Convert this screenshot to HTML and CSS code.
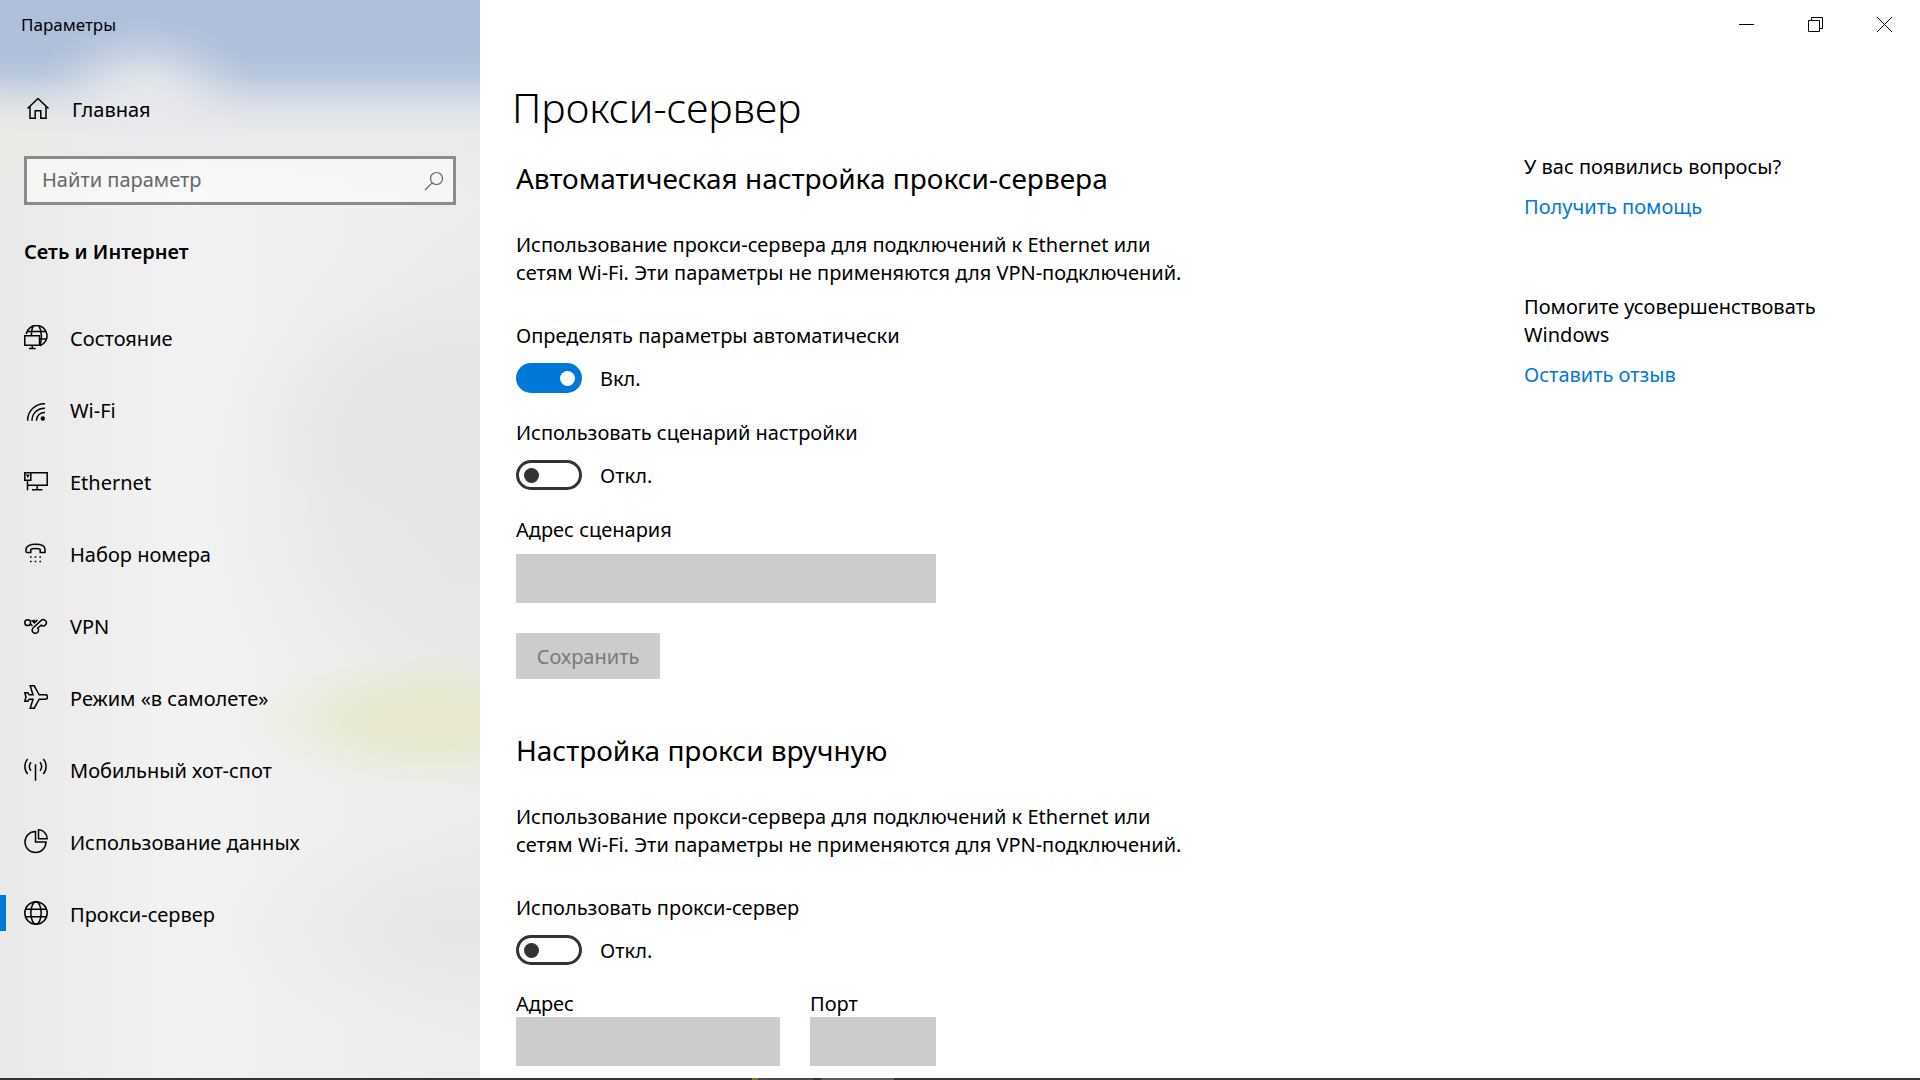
FILE: index.html
```html
<!DOCTYPE html>
<html lang="ru">
<head>
<meta charset="utf-8">
<meta name="viewport" content="width=device-width, initial-scale=1">
<title>Параметры</title>
<link rel="stylesheet" href="styles.css">
</head>
<body>
<div class="window">
  <aside class="sidebar">
    <div class="window-title">Параметры</div>
    <a class="nav-link home" href="#home">
      <svg class="icon" viewBox="0 0 24 28" aria-hidden="true"><path d="M1.500 12.500 12 2.500l10.500 10M4 10.500V22.200h5.200v-7.500h5.600v7.500H20V10.500"/></svg>
      Главная
    </a>
    <form class="search" role="search">
      <input class="search-input" type="search" placeholder="Найти параметр" aria-label="Найти параметр">
      <button class="search-button" type="button" aria-label="Поиск">
        <svg class="search-icon" viewBox="0 0 20 20" aria-hidden="true"><circle cx="12.500" cy="7.500" r="6"/><path d="M8.300 11.700 1 19"/></svg>
      </button>
    </form>
    <h2 class="section-name">Сеть и Интернет</h2>
    <nav class="nav">
      <a class="nav-link" href="#status">
        <svg class="icon" viewBox="0 0 24 28" aria-hidden="true"><path d="M2.200 9A10.500 10.500 0 1 1 16 20.800M2.800 6.500h18.700M16 14h6M9.300 1.200C8 3 7.500 5 7.400 10M15 1.200c3 5 3 13 1 19"/><path d="M.8 10.800h14.700v9.400H.8zM8.200 20.200v3.400M5 23.500h6.600"/></svg>
        Состояние
      </a>
      <a class="nav-link" href="#wifi">
        <svg class="icon" viewBox="0 0 24 28" aria-hidden="true"><path d="M3.700 23.700V23A16.800 16.300 0 0 1 21 6.700M8 23.700V23a12.500 12 0 0 1 13-11.800M12.500 23.700V23a8 7.700 0 0 1 8.500-7.500"/><circle class="solid" cx="18.800" cy="21.500" r="2.200"/></svg>
        Wi-Fi
      </a>
      <a class="nav-link" href="#ethernet">
        <svg class="icon" viewBox="0 0 24 28" aria-hidden="true"><path d="M6.800 3.800h16.400v12.400H3.500M.8 3.800h6v7.400h-6zM3.500 11v10.300M13.200 16v4.700M8 20.800h10.300M2.200 6.300h3.200M3.800 6.300v2.200"/></svg>
        Ethernet
      </a>
      <a class="nav-link" href="#dialup">
        <svg class="icon" viewBox="0 0 24 28" aria-hidden="true"><path d="M2 8.500C2 5 6 3.300 11.500 3.300S21 5 21 8.500v3h-4.800v-3c-1.500-1.200-7.900-1.200-9.400 0v3H3.300C2.500 11.500 2 11 2 10.500z"/><path class="solid" d="M6 15.200h1.600v1.600H6zM10.700 15.200h1.600v1.600h-1.600zM15.400 15.200H17v1.600h-1.600zM6 19.700h1.600v1.600H6zM10.700 19.700h1.600v1.600h-1.600zM15.400 19.700H17v1.600h-1.600z"/></svg>
        Набор номера
      </a>
      <a class="nav-link" href="#vpn">
        <svg class="icon" viewBox="0 0 24 28" aria-hidden="true"><circle cx="3.700" cy="9.700" r="2.900"/><path d="M9.200 14.800 17 7.600a3.100 3.100 0 1 1 .2 4.600l-3.500 2.800A3.200 3.200 0 1 1 9.200 14.800M6.300 11 8.500 12.800M7.500 7.200l3.600 3.200M9.500 6.900l2 1.800 2-1.800"/></svg>
        VPN
      </a>
      <a class="nav-link" href="#airplane">
        <svg class="icon" viewBox="0 0 24 28" aria-hidden="true"><path d="M6.200.8h4l5 9h6.300a2 2.200 0 0 1 0 4.400h-6.300l-5 9h-4l2.800-9H5.200l-1.500 2H.8L2 12 .8 7.800h2.900l1.500 2H9z"/></svg>
        Режим «в самолете»
      </a>
      <a class="nav-link" href="#hotspot">
        <svg class="icon" viewBox="0 0 24 28" aria-hidden="true"><path d="M11.500 7.300v16.400M3.700 2C0 6 0 13 3.700 17M19.300 2c3.700 4 3.700 11 0 15M7 5.300c-2 2.500-2 6 0 8.500M16 5.300c2 2.500 2 6 0 8.500"/></svg>
        Мобильный хот-спот
      </a>
      <a class="nav-link" href="#usage">
        <svg class="icon" viewBox="0 0 24 28" aria-hidden="true"><path d="M11.500 2.500A10.500 10.500 0 1 0 22 13H11.500zM14.500.8v9h8.700A8.700 9 0 0 0 14.500.8z"/></svg>
        Использование данных
      </a>
      <a class="nav-link active" href="#proxy" aria-current="page">
        <svg class="icon" viewBox="0 0 24 28" aria-hidden="true"><circle cx="12" cy="12" r="11.200"/><ellipse cx="12" cy="12" rx="5.200" ry="11.200"/><path d="M1.500 8.300h21M1.500 15.700h21"/></svg>
        Прокси-сервер
      </a>
    </nav>
  </aside>

  <div class="page">
    <div class="caption">
      <button class="caption-button" type="button" aria-label="Свернуть"><svg class="caption-icon" viewBox="0 0 15 15" aria-hidden="true"><path d="M0 7.500h15"/></svg></button>
      <button class="caption-button" type="button" aria-label="Восстановить"><svg class="caption-icon" viewBox="0 0 15 15" aria-hidden="true"><path d="M.5 3.500h11v11H.5zM3.500 3.500v-3h11v11h-3"/></svg></button>
      <button class="caption-button" type="button" aria-label="Закрыть"><svg class="caption-icon" viewBox="0 0 15 15" aria-hidden="true"><path d="M0 0l15 15M15 0 0 15"/></svg></button>
    </div>
    <div class="columns">
      <main class="content">
        <h1 class="page-title">Прокси-сервер</h1>

        <section class="group">
          <h2 class="group-title">Автоматическая настройка прокси-сервера</h2>
          <p class="description">Использование прокси-сервера для подключений к Ethernet или сетям Wi-Fi. Эти параметры не применяются для VPN-подключений.</p>
          <div class="setting">
            <label for="auto-detect">Определять параметры автоматически</label>
            <div class="switch-row"><input class="switch" type="checkbox" role="switch" id="auto-detect" checked><span>Вкл.</span></div>
          </div>
          <div class="setting">
            <label for="use-script">Использовать сценарий настройки</label>
            <div class="switch-row"><input class="switch" type="checkbox" role="switch" id="use-script"><span>Откл.</span></div>
          </div>
          <div class="setting script-address">
            <label for="script-address">Адрес сценария</label>
            <input class="field" type="text" id="script-address" disabled>
          </div>
          <button class="save" type="button" disabled>Сохранить</button>
        </section>

        <section class="group">
          <h2 class="group-title">Настройка прокси вручную</h2>
          <p class="description">Использование прокси-сервера для подключений к Ethernet или сетям Wi-Fi. Эти параметры не применяются для VPN-подключений.</p>
          <div class="setting">
            <label for="use-proxy">Использовать прокси-сервер</label>
            <div class="switch-row"><input class="switch" type="checkbox" role="switch" id="use-proxy"><span>Откл.</span></div>
          </div>
          <div class="endpoint">
            <div class="endpoint-part">
              <label for="address">Адрес</label>
              <input class="field" type="text" id="address" disabled>
            </div>
            <div class="endpoint-part">
              <label for="port">Порт</label>
              <input class="field" type="text" id="port" disabled>
            </div>
          </div>
        </section>
      </main>

      <aside class="help">
        <section class="help-block">
          <p>У вас появились вопросы?</p>
          <a class="help-link" href="#help">Получить помощь</a>
        </section>
        <section class="help-block">
          <p>Помогите усовершенствовать Windows</p>
          <a class="help-link" href="#feedback">Оставить отзыв</a>
        </section>
      </aside>
    </div>
  </div>
</div>
<div class="taskbar"><span class="task task-alert"></span><span class="task task-open"></span><span class="task task-current"></span></div>
</body>
</html>
```
FILE: styles.css
```css
* {
  box-sizing: border-box;
}

body {
  display: flex;
  flex-direction: column;
  min-height: 100vh;
  margin: 0;
  background: #fff;
  color: #000;
  font: 20px/28px "Noto Sans", "Open Sans", sans-serif;
}

h1, h2, p {
  margin: 0;
  font-weight: 400;
}

button, input {
  margin: 0;
  padding: 0;
  border: 0;
  border-radius: 0;
  background: none;
  color: inherit;
  font: inherit;
}

.window {
  display: flex;
  flex: 1;
}

/* Sidebar: frosted wallpaper under the navigation */

.sidebar {
  flex: none;
  width: 480px;
  background:
    radial-gradient(ellipse 115px 85px at 145px 100px, rgba(233, 234, 237, 0.9), rgba(233, 234, 237, 0.75) 30%, rgba(233, 234, 237, 0.35) 60%, rgba(233, 234, 237, 0.1) 83%, rgba(233, 234, 237, 0)),
    radial-gradient(ellipse 110px 70px at 0 140px, rgba(238, 234, 222, 0.5), rgba(238, 234, 222, 0)),
    linear-gradient(#adbfdb 0, #afc0db 55px, #b8c8dd 75px, #ccd5e3 92px, #dfe2e9 112px, rgba(232, 234, 235, 0.9) 135px, rgba(238, 238, 238, 0) 200px),
    radial-gradient(ellipse 210px 75px at 435px 720px, rgba(231, 232, 204, 1), rgba(231, 232, 204, 0.85) 35%, rgba(231, 232, 204, 0.35) 68%, rgba(231, 232, 204, 0.1) 85%, rgba(231, 232, 204, 0)),
    radial-gradient(ellipse 150px 110px at 390px 410px, rgba(230, 226, 226, 0.5), rgba(230, 226, 226, 0)),
    radial-gradient(ellipse 280px 280px at 480px 490px, #e6e6e6, rgba(230, 230, 230, 0.8) 50%, rgba(230, 230, 230, 0.2) 82%, rgba(230, 230, 230, 0)),
    radial-gradient(ellipse 240px 110px at 460px 930px, #e6e6e6, rgba(230, 230, 230, 0)),
    linear-gradient(90deg, #e9e9e9, #f2f2f2 180px, #f1f1f1 230px, #ececec);
}

.window-title {
  padding: 13px 21px 11px;
  font-size: 17px;
  line-height: 24px;
}

.nav-link {
  display: flex;
  position: relative;
  gap: 22px;
  align-items: center;
  height: 72px;
  padding: 0 24px;
  color: inherit;
  text-decoration: none;
}

.home {
  margin-top: 26px;
  padding-left: 26px;
}

.icon {
  width: 24px;
  height: 28px;
  fill: none;
  stroke: currentColor;
  stroke-width: 1.5;
}

.icon .solid {
  fill: currentColor;
  stroke: none;
}

.search {
  display: flex;
  height: 49px;
  margin: 10px 24px 0;
  border: 3px solid #8b8b8b;
  background: rgba(255, 255, 255, 0.5);
}

.search-input {
  flex: 1;
  min-width: 0;
  padding: 0 0 2px 15px;
  outline: 0;
  appearance: none;
}

.search-input::placeholder {
  color: #666;
  opacity: 1;
}

.search-button {
  display: flex;
  align-items: center;
  justify-content: center;
  width: 38px;
}

.search-icon {
  width: 20px;
  height: 20px;
  fill: none;
  stroke: #666;
  stroke-width: 1.2;
}

.section-name {
  padding: 33px 24px 37px;
  font-size: 20px;
  font-weight: 600;
}

.active::before {
  position: absolute;
  top: 16px;
  left: 0;
  width: 6px;
  height: 36px;
  background: #0078d7;
  content: "";
}

/* Page */

.page {
  flex: 1;
  min-width: 0;
}

.caption {
  display: flex;
  justify-content: flex-end;
  height: 48px;
  padding-right: 1px;
}

.caption-button {
  display: flex;
  align-items: center;
  justify-content: center;
  width: 69px;
}

.caption-icon {
  width: 15px;
  height: 15px;
  fill: none;
  stroke: #000;
  stroke-width: 1;
}

.columns {
  display: flex;
  justify-content: space-between;
  padding: 30px 0 12px 36px;
}

.content {
  width: 680px;
}

.page-title {
  margin-left: -4px;
  font-size: 41px;
  font-weight: 300;
  line-height: 58px;
}

.group {
  margin-top: 24px;
}

.group + .group {
  margin-top: 53px;
}

.group-title {
  font-size: 28px;
  line-height: 36px;
}

.description {
  margin: 35px 0;
}

.setting {
  display: flex;
  flex-direction: column;
  margin-bottom: 26px;
}

.switch-row {
  display: flex;
  gap: 18px;
  align-items: flex-end;
  margin-top: 13px;
}

.switch {
  display: flex;
  align-items: center;
  width: 66px;
  height: 30px;
  padding: 0 5px;
  border: 3px solid #333;
  border-radius: 15px;
  appearance: none;
}

.switch::before {
  width: 15px;
  height: 15px;
  border-radius: 50%;
  background: #333;
  content: "";
}

.switch:checked {
  justify-content: flex-end;
  padding-right: 4px;
  border-color: #0078d7;
  background: #0078d7;
}

.switch:checked::before {
  background: #fff;
}

.field {
  width: 100%;
  height: 49px;
  background: #ccc;
}

.script-address {
  gap: 10px;
  width: 420px;
  margin-bottom: 30px;
}

.save {
  display: block;
  width: 144px;
  height: 46px;
  padding-top: 2px;
  background: #ccc;
  color: #7a7a7a;
}

.endpoint {
  display: grid;
  grid-template-columns: 264px 126px;
  gap: 30px;
  line-height: 26px;
}

.endpoint-part {
  display: flex;
  flex-direction: column;
}

.help {
  display: flex;
  flex-direction: column;
  gap: 72px;
  width: 396px;
  padding: 75px 76px 0 0;
}

.help-link {
  display: inline-block;
  margin-top: 12px;
  color: #0078d7;
  text-decoration: none;
}

/* Top edge of the taskbar */

.taskbar {
  display: flex;
  height: 2px;
  padding-left: 752px;
  background: #333;
}

.task-alert {
  width: 6px;
  background: #7c7a2a;
}

.task-open {
  width: 55px;
  margin-right: 8px;
  background: #4a4a4a;
}

.task-current {
  width: 73px;
  background: #5c5c5c;
}
```
